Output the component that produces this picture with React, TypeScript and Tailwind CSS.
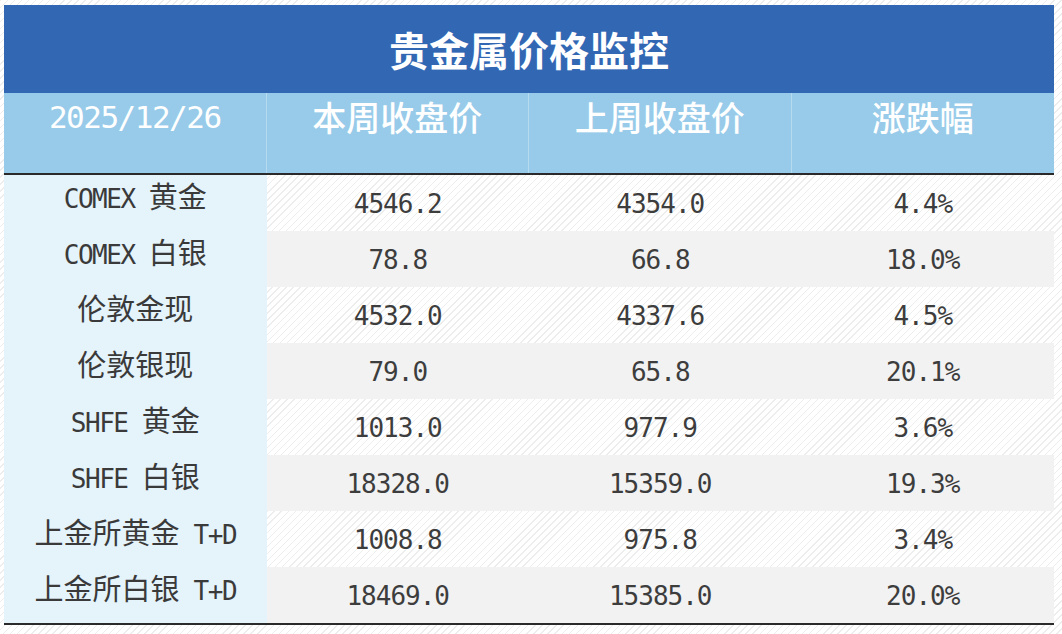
import React from 'react';

const rows = [
  { name: 'COMEX 黄金', cur: '4546.2', prev: '4354.0', chg: '4.4%' },
  { name: 'COMEX 白银', cur: '78.8', prev: '66.8', chg: '18.0%' },
  { name: '伦敦金现', cur: '4532.0', prev: '4337.6', chg: '4.5%' },
  { name: '伦敦银现', cur: '79.0', prev: '65.8', chg: '20.1%' },
  { name: 'SHFE 黄金', cur: '1013.0', prev: '977.9', chg: '3.6%' },
  { name: 'SHFE 白银', cur: '18328.0', prev: '15359.0', chg: '19.3%' },
  { name: '上金所黄金 T+D', cur: '1008.8', prev: '975.8', chg: '3.4%' },
  { name: '上金所白银 T+D', cur: '18469.0', prev: '15385.0', chg: '20.0%' },
];

const hatch =
  'bg-[repeating-linear-gradient(135deg,#ededed_0px,#ededed_1px,#ffffff_1px,#ffffff_5px)]';

// split a label into CJK and latin runs so each gets its own font
const Label: React.FC<{ text: string }> = ({ text }) => {
  const parts = text.split(/([\u4e00-\u9fff]+)/).filter(Boolean);
  return (
    <span className="whitespace-pre">
      {parts.map((p, i) =>
        /[\u4e00-\u9fff]/.test(p) ? (
          <span key={i} className="font-['Noto_Sans_CJK_SC',sans-serif] text-[29px]">
            {p}
          </span>
        ) : (
          <span key={i} className="font-['DejaVu_Sans_Mono',monospace] text-[26px] tracking-[-1.5px]">
            {p}
          </span>
        )
      )}
    </span>
  );
};

const Num: React.FC<{ value: string }> = ({ value }) => (
  <span className="font-['DejaVu_Sans_Mono',monospace] text-[26px] tracking-[-1px] text-[#3d3d3d]">
    {value}
  </span>
);

export default function App() {
  return (
    <div className={`w-[1062px] h-[634px] ${hatch} pt-[5px] pl-[4px]`}>
      <div className="w-[1050px]">
        <div className="h-[88px] bg-[#3267b4] flex items-center justify-center">
          <span className="text-white text-[40px] font-bold font-['Noto_Sans_CJK_SC',sans-serif] leading-none">
            贵金属价格监控
          </span>
        </div>

        <div className="grid grid-cols-4 h-[80px] bg-[#98cbe9] text-white">
          <div className="flex justify-center pt-[6px] border-r border-[#b6dbf0]">
            <span className="font-['DejaVu_Sans_Mono',monospace] text-[31px] tracking-[-1.5px] leading-[36px]">
              2025/12/26
            </span>
          </div>
          {['本周收盘价', '上周收盘价', '涨跌幅'].map((h, i) => (
            <div
              key={h}
              className={`flex justify-center pt-[4px] ${i < 2 ? 'border-r border-[#b6dbf0]' : ''}`}
            >
              <span className="font-['Noto_Sans_CJK_SC',sans-serif] font-medium text-[34px] leading-[40px]">
                {h}
              </span>
            </div>
          ))}
        </div>

        <div className="border-t-2 border-b-2 border-[#2a2a2a]">
          {rows.map((r, i) => {
            const bg = i % 2 === 0 ? 'bg-transparent' : 'bg-[#f2f2f2]';
            return (
              <div key={r.name} className="grid grid-cols-4 h-[56px]">
                <div className="bg-[#e5f3fa] flex items-center justify-center pb-[10px] text-[#3a3a3a] leading-[34px]">
                  <Label text={r.name} />
                </div>
                <div className={`${bg} flex items-center justify-center pt-[3px]`}>
                  <Num value={r.cur} />
                </div>
                <div className={`${bg} flex items-center justify-center pt-[3px]`}>
                  <Num value={r.prev} />
                </div>
                <div className={`${bg} flex items-center justify-center pt-[3px]`}>
                  <Num value={r.chg} />
                </div>
              </div>
            );
          })}
        </div>
      </div>
    </div>
  );
}
